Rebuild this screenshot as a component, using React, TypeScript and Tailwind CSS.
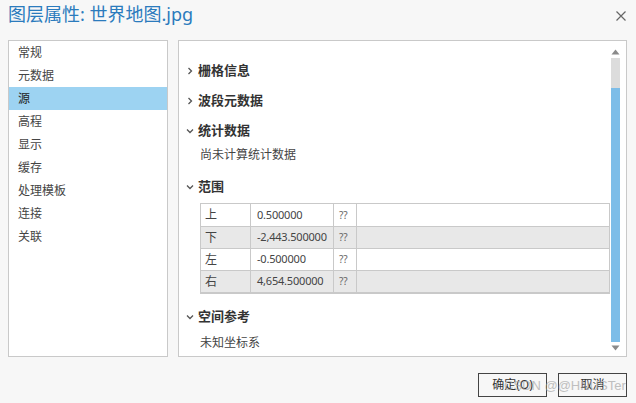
import React from 'react';

const font = { fontFamily: '"Noto Sans", "Noto Sans CJK SC", sans-serif' };

const navItems = ['常规', '元数据', '源', '高程', '显示', '缓存', '处理模板', '连接', '关联'];

const extentRows = [
  { side: '上', value: '0.500000' },
  { side: '下', value: '-2,443.500000' },
  { side: '左', value: '-0.500000' },
  { side: '右', value: '4,654.500000' },
];

const Chevron = ({ open }: { open?: boolean }) => (
  <svg width="8" height="8" viewBox="0 0 8 8" className="shrink-0">
    {open ? (
      <path d="M1 2.5 L4 5.5 L7 2.5" fill="none" stroke="#555" strokeWidth="1.3" />
    ) : (
      <path d="M2.5 1 L5.5 4 L2.5 7" fill="none" stroke="#555" strokeWidth="1.3" />
    )}
  </svg>
);

const SectionHeader = ({ label, open }: { label: string; open?: boolean }) => (
  <div className="flex h-[30px] items-center gap-[4px] pl-[7px] text-[13px] font-bold text-[#333]">
    <Chevron open={open} />
    <span>{label}</span>
  </div>
);

export default function App() {
  return (
    <div className="relative flex h-[403px] w-[636px] flex-col bg-[#f7f7f7] text-[#333]" style={font}>
      {/* title bar */}
      <div className="flex h-[40px] items-start justify-between pl-[8px] pr-[10px] pt-[2px]">
        <span className="text-[18px] leading-[24px] text-[#2b7bbd]">图层属性: 世界地图.jpg</span>
        <svg width="10" height="10" viewBox="0 0 10 10" className="mt-[9px]">
          <path d="M0.5 0.5 L9.5 9.5 M9.5 0.5 L0.5 9.5" stroke="#666" strokeWidth="1.2" />
        </svg>
      </div>

      <div className="flex h-[317px] gap-[10px] pl-[8px] pr-[9px]">
        {/* nav list */}
        <div className="w-[160px] border border-[#c9c9c9] bg-white">
          {navItems.map((item) => (
            <div
              key={item}
              className={`flex h-[23px] items-center pl-[9px] text-[12px] ${
                item === '源' ? 'bg-[#9dd3f2] text-[#222]' : 'text-[#444]'
              }`}
            >
              {item}
            </div>
          ))}
        </div>

        {/* detail panel */}
        <div className="flex flex-1 border border-[#c9c9c9] bg-white">
          <div className="flex-1 pt-[15px]">
            <SectionHeader label="栅格信息" />
            <SectionHeader label="波段元数据" />
            <SectionHeader label="统计数据" open />
            <div className="h-[26px] pl-[21px] text-[12px] leading-[18px] text-[#444]">尚未计算统计数据</div>
            <SectionHeader label="范围" open />
            <div className="ml-[21px] mr-[1px] mt-[1px] border border-b-2 border-[#c9c9c9] text-[12px] text-[#444]">
              {extentRows.map((row, i) => (
                <div
                  key={row.side}
                  className={`flex h-[22px] items-center ${i > 0 ? 'border-t border-[#c9c9c9]' : ''} ${
                    i % 2 === 1 ? 'bg-[#e8e8e8]' : 'bg-white'
                  }`}
                >
                  <div className="flex h-full w-[50px] items-center border-r border-[#c9c9c9] pl-[4px]">{row.side}</div>
                  <div className="flex h-full w-[83px] items-center whitespace-nowrap border-r border-[#c9c9c9] pl-[6px] text-[11px] tracking-[-0.2px]">
                    {row.value}
                  </div>
                  <div className="flex h-full w-[23px] items-center border-r border-[#c9c9c9] pl-[5px] text-[10px] text-[#666]">??</div>
                  <div className="h-full flex-1" />
                </div>
              ))}
            </div>
            <div className="mt-[8px]">
              <SectionHeader label="空间参考" open />
            </div>
            <div className="pl-[21px] pt-[2px] text-[12px] leading-[18px] text-[#444]">未知坐标系</div>
          </div>

          {/* scrollbar */}
          <div className="mr-[6px] flex w-[9px] flex-col items-center pb-[5px] pt-[8px]">
            <svg width="9" height="6" viewBox="0 0 9 6">
              <path d="M4.5 0.5 L8.5 5.5 L0.5 5.5 Z" fill="#8a8a8a" />
            </svg>
            <div className="mt-[3px] flex w-[9px] flex-1 flex-col">
              <div className="h-[30px] bg-[#dcdcdc]" />
              <div className="flex-1 bg-[#7dbde8]" />
            </div>
            <svg width="9" height="6" viewBox="0 0 9 6" className="mt-[3px]">
              <path d="M0.5 0.5 L8.5 0.5 L4.5 5.5 Z" fill="#8a8a8a" />
            </svg>
          </div>
        </div>
      </div>

      {/* buttons */}
      <div className="flex justify-end gap-[11px] pr-[9px] pt-[16px]">
        <button className="h-[24px] w-[69px] border border-[#444] bg-[#f7f7f7] text-[12px] text-[#333]">确定(O)</button>
        <button className="h-[24px] w-[69px] border border-[#444] bg-[#f7f7f7] text-[12px] text-[#333]">取消</button>
      </div>

      {/* watermark */}
      <div
        className="pointer-events-none absolute left-[504px] top-[378px] whitespace-nowrap text-[13px] leading-[16px] text-[#a8a8a8] opacity-70"
        style={{ fontFamily: '"Liberation Sans", sans-serif' }}
      >
        CSDN @@HNUSTer
      </div>
    </div>
  );
}
